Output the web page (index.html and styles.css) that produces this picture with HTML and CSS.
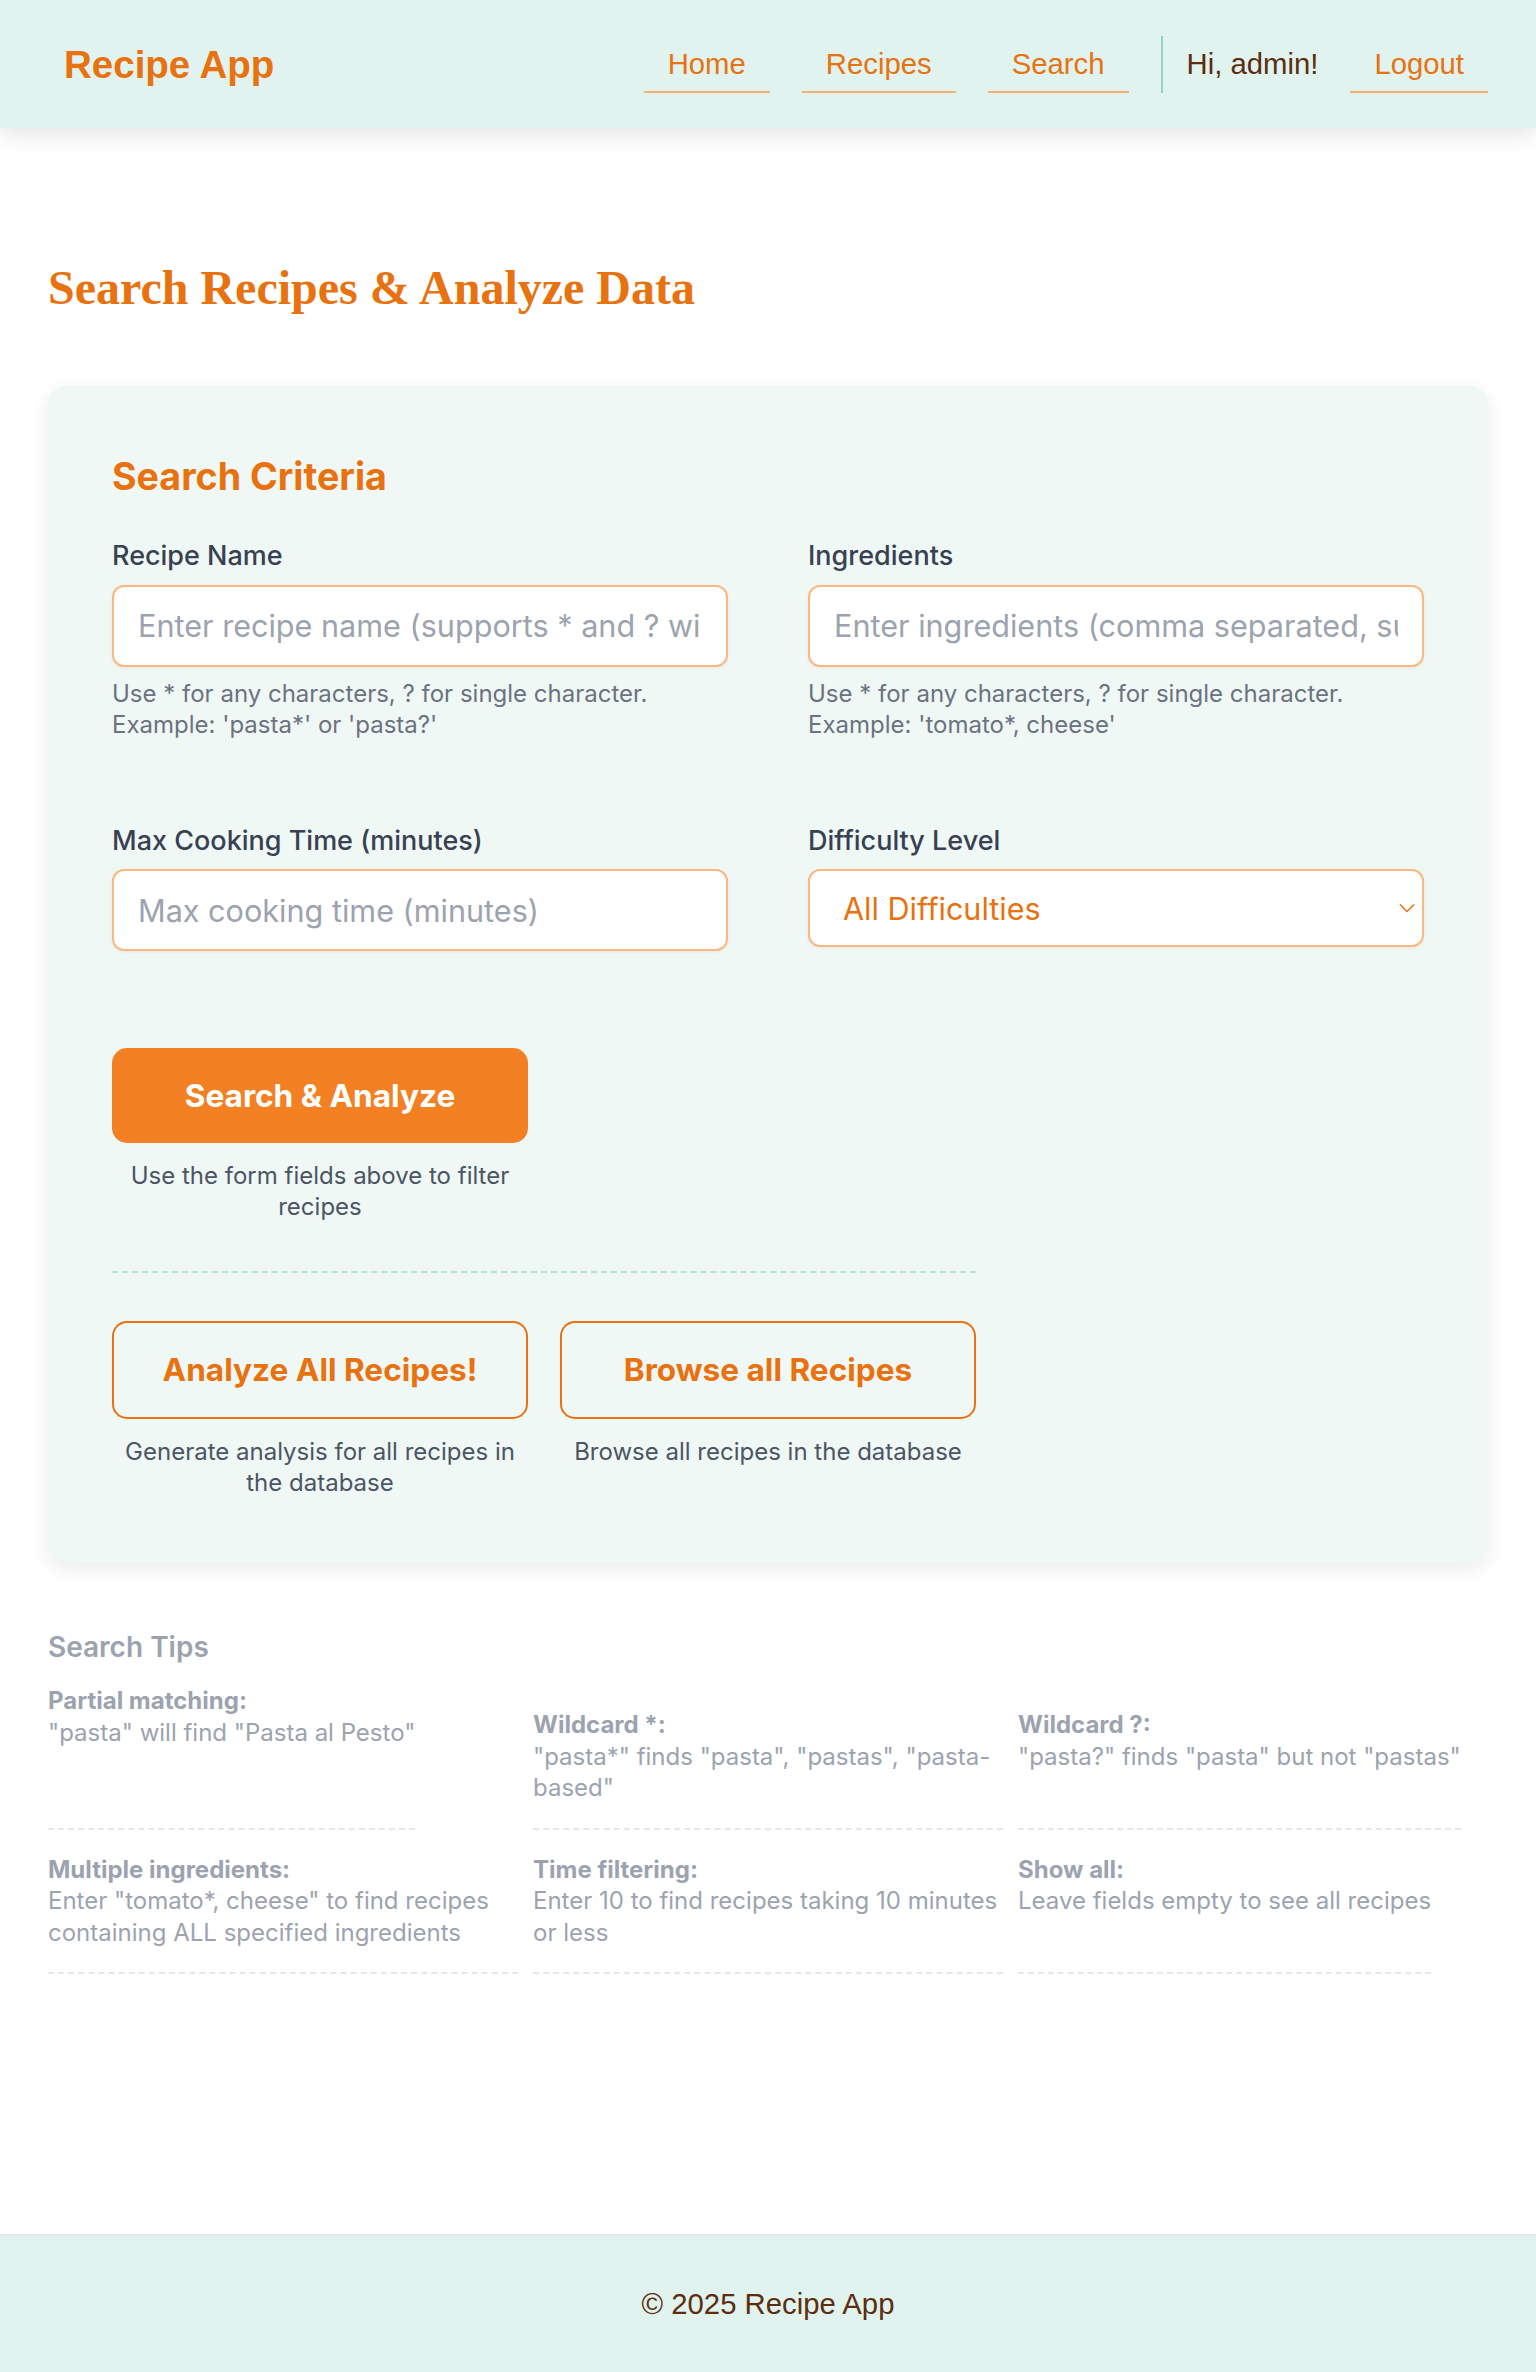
FILE: index.html
```html
<!DOCTYPE html>
<html lang="en">
<head>
<meta charset="utf-8">
<title>Search Recipes - Recipe App</title>
<link rel="stylesheet" href="styles.css">
</head>
<body>
<header class="site-header">
  <a class="logo" href="#">Recipe App</a>
  <nav class="nav">
    <a class="nav-link" href="#">Home</a>
    <a class="nav-link" href="#">Recipes</a>
    <a class="nav-link" href="#">Search</a>
    <div class="user">
      <span class="greeting">Hi, admin!</span>
      <a class="nav-link" href="#">Logout</a>
    </div>
  </nav>
</header>

<main class="main">
  <h1 class="page-title">Search Recipes &amp; Analyze Data</h1>

  <section class="card">
    <h2 class="card-title">Search Criteria</h2>
    <form class="form-grid">
      <div class="field">
        <label class="field-label" for="name">Recipe Name</label>
        <input class="input" id="name" type="text" placeholder="Enter recipe name (supports * and ? wildcards)">
        <p class="hint">Use * for any characters, ? for single character.<br>Example: 'pasta*' or 'pasta?'</p>
      </div>
      <div class="field">
        <label class="field-label" for="ingredients">Ingredients</label>
        <input class="input" id="ingredients" type="text" placeholder="Enter ingredients (comma separated, supports wildcards)">
        <p class="hint">Use * for any characters, ? for single character.<br>Example: 'tomato*, cheese'</p>
      </div>
      <div class="field">
        <label class="field-label" for="time">Max Cooking Time (minutes)</label>
        <input class="input" id="time" type="number" placeholder="Max cooking time (minutes)">
      </div>
      <div class="field">
        <label class="field-label" for="difficulty">Difficulty Level</label>
        <div class="select-wrap">
          <select class="select" id="difficulty">
            <option>All Difficulties</option>
            <option>Easy</option>
            <option>Medium</option>
            <option>Intermediate</option>
            <option>Hard</option>
          </select>
          <svg class="chevron" width="16" height="10" viewBox="0 0 16 10" aria-hidden="true"><polyline points="1,1.5 8,8.5 15,1.5" fill="none" stroke="#e8720f" stroke-width="1.5"/></svg>
        </div>
      </div>
    </form>

    <div class="actions">
      <div class="action primary-action">
        <button class="btn btn-primary" type="button">Search &amp; Analyze</button>
        <p class="action-desc">Use the form fields above to filter recipes</p>
      </div>
      <hr class="divider">
      <div class="secondary-actions">
        <div class="action">
          <button class="btn btn-outline" type="button">Analyze All Recipes!</button>
          <p class="action-desc">Generate analysis for all recipes in the database</p>
        </div>
        <div class="action">
          <button class="btn btn-outline" type="button">Browse all Recipes</button>
          <p class="action-desc">Browse all recipes in the database</p>
        </div>
      </div>
    </div>
  </section>

  <section class="tips">
    <h3 class="tips-title">Search Tips</h3>
    <div class="tips-grid">
      <div class="tip"><strong>Partial matching:</strong>"pasta" will find "Pasta al Pesto"</div>
      <div class="tip"><strong>Wildcard *:</strong>"pasta*" finds "pasta", "pastas", "pasta-based"</div>
      <div class="tip"><strong>Wildcard ?:</strong>"pasta?" finds "pasta" but not "pastas"</div>
      <div class="tip"><strong>Multiple ingredients:</strong>Enter "tomato*, cheese" to find recipes containing ALL specified ingredients</div>
      <div class="tip"><strong>Time filtering:</strong>Enter 10 to find recipes taking 10 minutes or less</div>
      <div class="tip"><strong>Show all:</strong>Leave fields empty to see all recipes</div>
    </div>
  </section>
</main>

<footer class="site-footer">© 2025 Recipe App</footer>
</body>
</html>
```

FILE: styles.css
```css
* { box-sizing: border-box; }

html, body { margin: 0; padding: 0; }

body {
  min-height: 100vh;
  display: flex;
  flex-direction: column;
  font-family: Inter, "Noto Sans", sans-serif;
  color: #374151;
  background: #ffffff;
}

/* Header */
.site-header {
  height: 128px;
  flex-shrink: 0;
  background: #e0f3ef;
  display: flex;
  align-items: center;
  justify-content: space-between;
  padding: 0 48px 0 64px;
  box-shadow: 0 6px 22px rgba(0, 0, 0, 0.11);
  position: relative;
  z-index: 1;
}

.logo {
  font-family: "Liberation Sans", Arial, sans-serif;
  font-weight: 700;
  font-size: 38.5px;
  color: #e8720f;
  text-decoration: none;
  padding-top: 2px;
}

.nav {
  display: flex;
  align-items: stretch;
  gap: 32px;
}

.nav-link {
  font-family: "Liberation Sans", Arial, sans-serif;
  font-size: 29.3px;
  line-height: 33px;
  color: #e8720f;
  text-decoration: none;
  padding: 11px 24px;
  border-bottom: 2px solid #f8ae72;
}

.user {
  display: flex;
  align-items: stretch;
  gap: 32px;
  border-left: 2px solid #93d3c4;
  padding-left: 24px;
}

.greeting {
  align-self: center;
  font-family: "Liberation Sans", Arial, sans-serif;
  font-size: 29.3px;
  color: #5c2d0e;
}

/* Main */
.main {
  flex: 1;
  padding: 132px 48px 48px;
}

.page-title {
  font-family: "Liberation Serif", "Times New Roman", serif;
  font-size: 48px;
  font-weight: 700;
  line-height: normal;
  color: #e8720f;
  margin: 0 0 71px;
}

.card {
  background: #f0f8f6;
  border-radius: 18px;
  padding: 64px;
  box-shadow: 0 6px 20px rgba(0, 0, 0, 0.08);
}

.card-title {
  font-size: 37.6px;
  font-weight: 700;
  line-height: 43px;
  color: #e8720f;
  margin: 5px 0 40px;
}

.form-grid {
  display: grid;
  grid-template-columns: 1fr 1fr;
  column-gap: 80px;
  row-gap: 82px;
}

.field-label {
  display: block;
  font-size: 27px;
  font-weight: 500;
  line-height: 36px;
  color: #374151;
  margin-bottom: 10.5px;
}

.input,
.select {
  display: block;
  width: 100%;
  border: 2px solid #fdb77f;
  border-radius: 12px;
  background: #ffffff;
  font-family: Inter, "Noto Sans", sans-serif;
  font-size: 30.6px;
  box-shadow: 0 1px 3px rgba(0, 0, 0, 0.06);
  outline: none;
}

.input {
  height: 82px;
  padding: 0 24px;
  color: #374151;
}

.input::placeholder { color: #9ca3af; }

.input[type="number"] { -moz-appearance: textfield; appearance: textfield; }
.input::-webkit-outer-spin-button,
.input::-webkit-inner-spin-button { -webkit-appearance: none; margin: 0; }

.select-wrap { position: relative; }

.select {
  height: 78px;
  padding: 0 40px 0 33px;
  color: #e8720f;
  -webkit-appearance: none;
  appearance: none;
}

.chevron {
  position: absolute;
  right: 9px;
  top: 50%;
  transform: translateY(-50%);
  pointer-events: none;
}

.hint {
  font-size: 24px;
  line-height: 31.5px;
  color: #6b7280;
  margin: 11px 0 0;
}

/* Actions */
.actions {
  margin-top: 96.5px;
  max-width: 864px;
}

.primary-action { width: 416px; }

.action { text-align: center; }

.btn {
  display: block;
  width: 100%;
  font-family: Inter, "Noto Sans", sans-serif;
  font-size: 31.6px;
  font-weight: 700;
  border-radius: 15px;
  cursor: pointer;
}

.btn-primary {
  height: 95px;
  border: 0;
  background: #f38124;
  color: #ffffff;
}

.btn-outline {
  height: 98px;
  border: 2px solid #e8720f;
  background: transparent;
  color: #e8720f;
}

.action-desc {
  font-size: 24px;
  line-height: 31.5px;
  color: #4b5563;
  margin: 17px 0 0;
}

.divider {
  border: 0;
  border-top: 2px dashed #b5e2d8;
  margin: 48.5px 0 47.5px;
  height: 0;
}

.secondary-actions {
  display: grid;
  grid-template-columns: 416px 416px;
  column-gap: 32px;
}

/* Tips */
.tips { margin-top: 64px; }

.tips-title {
  font-size: 28px;
  font-weight: 600;
  line-height: 40.5px;
  color: #9ca3af;
  margin: 0 0 18px;
}

.tips-grid {
  display: grid;
  grid-template-columns: repeat(3, 1fr);
  column-gap: 15px;
  justify-items: start;
}

.tip {
  font-size: 24px;
  line-height: 31.5px;
  color: #9ca3af;
  padding-bottom: 24px;
  border-bottom: 2px dashed #e5e7eb;
}

.tip + .tip { margin-top: 24px; }

.tip strong {
  display: block;
  font-weight: 700;
  color: #9ca3af;
}

/* Footer */
.site-footer {
  flex-shrink: 0;
  height: 138px;
  background: #e0f3ef;
  border-top: 2px solid #e5e7eb;
  display: flex;
  align-items: center;
  justify-content: center;
  font-family: "Liberation Sans", Arial, sans-serif;
  font-size: 29.3px;
  color: #5c2d0e;
}
```
